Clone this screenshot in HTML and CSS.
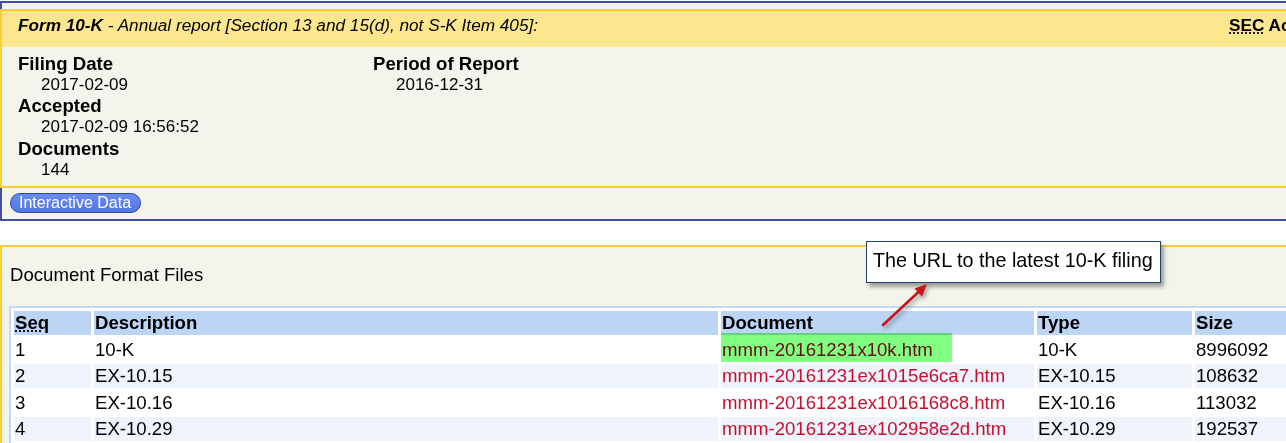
FILE: index.html
```html
<!DOCTYPE html>
<html>
<head>
<meta charset="utf-8">
<link rel="stylesheet" href="styles.css">
</head>
<body>
<div class="filing">
  <div class="form-box">
    <div class="form-head">
      <span class="form-title"><b>Form 10-K</b> - Annual report [Section 13 and 15(d), not S-K Item 405]:</span>
      <span class="sec-acc"><abbr title="Securities and Exchange Commission">SEC</abbr> Accession No. 0000066740-17-000004</span>
    </div>
    <div class="form-body">
      <div class="col col-first">
        <div class="label">Filing Date</div>
        <div class="value">2017-02-09</div>
        <div class="label">Accepted</div>
        <div class="value">2017-02-09 16:56:52</div>
        <div class="label">Documents</div>
        <div class="value">144</div>
      </div>
      <div class="col">
        <div class="label">Period of Report</div>
        <div class="value">2016-12-31</div>
      </div>
    </div>
  </div>
  <div class="actions"><a class="pill">Interactive Data</a></div>
</div>

<div class="doc-box">
  <p class="caption">Document Format Files</p>
  <table class="files">
    <thead>
      <tr>
        <th class="w-seq"><abbr title="Sequence Number">Seq</abbr></th>
        <th class="w-desc">Description</th>
        <th class="w-doc">Document</th>
        <th class="w-type">Type</th>
        <th class="w-size">Size</th>
      </tr>
    </thead>
    <tbody>
      <tr>
        <td>1</td><td>10-K</td>
        <td class="doc-cell"><a class="doc">mmm-20161231x10k.htm</a><span class="mark"></span></td>
        <td>10-K</td><td>8996092</td>
      </tr>
      <tr class="alt">
        <td>2</td><td>EX-10.15</td>
        <td><a class="doc">mmm-20161231ex1015e6ca7.htm</a></td>
        <td>EX-10.15</td><td>108632</td>
      </tr>
      <tr>
        <td>3</td><td>EX-10.16</td>
        <td><a class="doc">mmm-20161231ex1016168c8.htm</a></td>
        <td>EX-10.16</td><td>113032</td>
      </tr>
      <tr class="alt">
        <td>4</td><td>EX-10.29</td>
        <td><a class="doc">mmm-20161231ex102958e2d.htm</a></td>
        <td>EX-10.29</td><td>192537</td>
      </tr>
    </tbody>
  </table>
</div>

<div class="callout">The URL to the latest 10-K filing</div>
<svg class="arrow" width="60" height="55" viewBox="0 0 60 55">
  <line x1="8" y1="49" x2="44" y2="15.5" stroke="#c8141e" stroke-width="2.6" stroke-linecap="round"/>
  <polygon points="52,8 47,20.5 39.5,12.5" fill="#c8141e"/>
</svg>
</body>
</html>
```

FILE: styles.css
```css
html, body {
  margin: 0;
  padding: 0;
  overflow: hidden;
  background: #ffffff;
}

body {
  font-family: "Liberation Sans", Arial, sans-serif;
  color: #000;
  width: 1286px;
  height: 443px;
  position: relative;
}

.filing {
  width: 1500px;
  margin-top: 1px;
  border-top: 2px solid #3f51a5;
  border-left: 2px solid #3f51a5;
  border-bottom: 2px solid #3f51a5;
  background: #f4f4ec;
  padding-top: 6px;
}

.form-box {
  margin-left: -2px;
  border-top: 2px solid #ffcc33;
  border-left: 2px solid #ffcc33;
  border-bottom: 2px solid #ffcc33;
}

.form-head {
  display: flex;
  background: #fce68e;
  padding: 4px 0 12px 16px;
  font-size: 17.2px;
  line-height: 20px;
}

.form-title {
  flex: none;
  width: 1211px;
  font-style: italic;
}

.sec-acc {
  flex: none;
  font-weight: bold;
  white-space: nowrap;
}

abbr {
  text-decoration: underline dotted;
  text-underline-offset: 2px;
}

.form-body {
  display: flex;
  padding: 6px 16px 6px 16px;
}

.col-first {
  width: 355px;
}

.label {
  font-weight: bold;
  font-size: 18.6px;
  line-height: 21px;
}

.value {
  font-size: 17px;
  line-height: 21.3px;
  padding-left: 23px;
}

.actions {
  padding: 5px 0 6px 8px;
  height: 20px;
}

.pill {
  display: inline-block;
  box-sizing: border-box;
  height: 20px;
  width: 131px;
  border: 1px solid #2f48a6;
  border-radius: 10px;
  background: linear-gradient(#6a8cf0, #5276e4);
  color: #fff;
  font-size: 16px;
  line-height: 18px;
  padding: 0 0 0 8px;
  white-space: nowrap;
}

.doc-box {
  width: 1500px;
  margin-top: 24px;
  border-top: 2px solid #ffcc33;
  border-left: 2px solid #ffcc33;
  background: #f4f4ec;
  padding: 17px 0 20px 8px;
}

.caption {
  margin: 0 0 21px 0;
  font-size: 18.6px;
  line-height: 21px;
}

.files {
  table-layout: fixed;
  width: 1384px;
  margin-left: -1px;
  border: 2px solid #c2d8f6;
  border-spacing: 3px;
  background: #fff;
  font-size: 18.6px;
}

.files th,
.files td {
  box-sizing: border-box;
  padding: 0 1px;
  text-align: left;
  white-space: nowrap;
  overflow: visible;
}

.files th {
  background: #bdd5f5;
  font-weight: bold;
  height: 24px;
  line-height: 24px;
}

.files td {
  height: 23.5px;
  line-height: 23.5px;
}

.files tr.alt td {
  background: #eef3fc;
}

.w-seq { width: 77px; }
.w-desc { width: 624px; }
.w-doc { width: 313px; }
.w-type { width: 155px; }
.w-size { width: 197px; }

.doc {
  color: #c8102e;
}

.doc-cell {
  position: relative;
}

.mark {
  position: absolute;
  left: 0;
  top: -5px;
  width: 231px;
  height: 29px;
  background: #80ff80;
  mix-blend-mode: multiply;
}

.callout {
  position: absolute;
  left: 866px;
  top: 241px;
  width: 295px;
  height: 42px;
  box-sizing: border-box;
  border: 1px solid #24406c;
  background: #fff;
  box-shadow: 3px 4px 4px rgba(0, 0, 0, 0.35);
  font-size: 19.8px;
  line-height: 22px;
  padding: 7px 0 0 6px;
  white-space: nowrap;
}

.arrow {
  position: absolute;
  left: 875px;
  top: 276px;
  filter: drop-shadow(2px 3px 2px rgba(0, 0, 0, 0.35));
}
```
